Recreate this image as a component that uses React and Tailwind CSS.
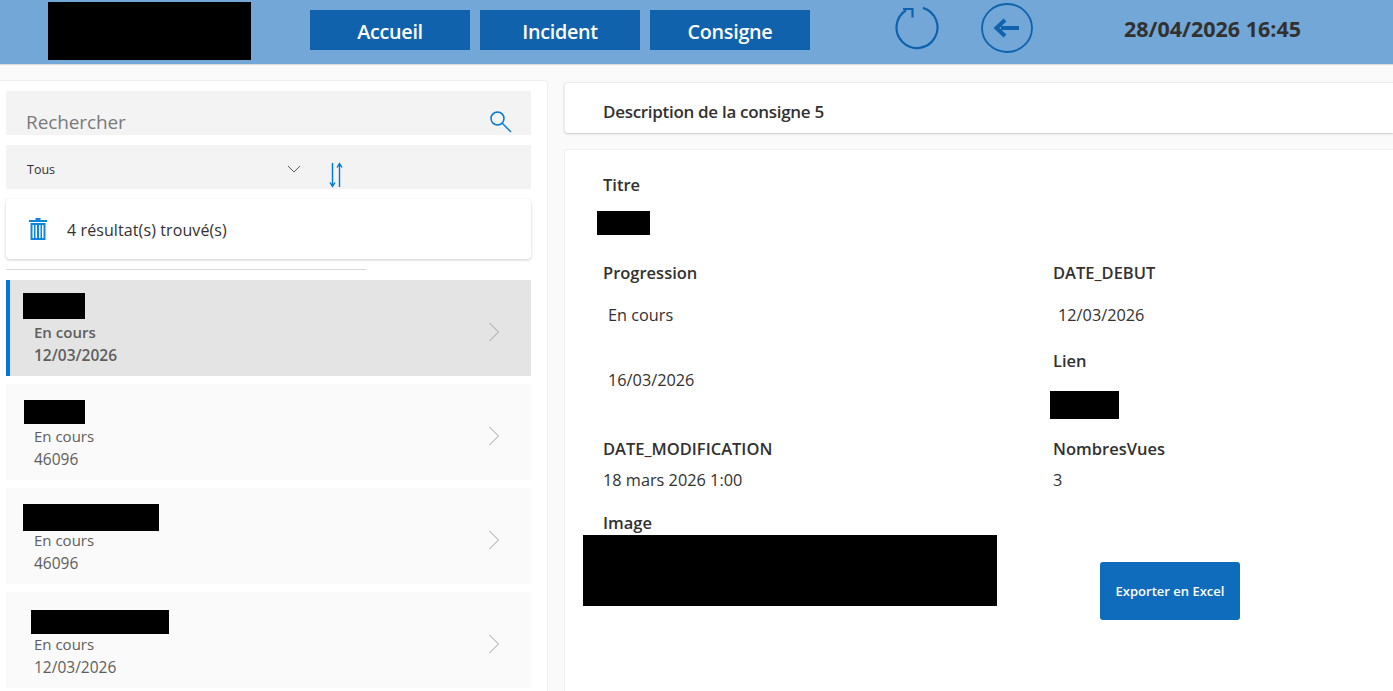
import { useState } from 'react'

const items = [
  { w: 'w-[62px]', h: 'h-[26px]', ml: 'ml-[17px]', mt: 'mt-[13px]', textMt: 'mt-[2px]', date: '12/03/2026' },
  { w: 'w-[61px]', h: 'h-[24px]', ml: 'ml-[18px]', mt: 'mt-[16px]', textMt: 'mt-[1px]', date: '46096' },
  { w: 'w-[136px]', h: 'h-[27px]', ml: 'ml-[17px]', mt: 'mt-[16px]', textMt: '-mt-[2px]', date: '46096' },
  { w: 'w-[138px]', h: 'h-[24px]', ml: 'ml-[25px]', mt: 'mt-[18px]', textMt: '-mt-[1px]', date: '12/03/2026' },
]

function NavButton({ children }) {
  return (
    <button className="w-[160px] h-[40px] bg-[#0f62ab] text-white text-[19.8px] font-semibold tracking-[-0.3px] pt-[4px]">
      {children}
    </button>
  )
}

function RefreshIcon() {
  return (
    <svg width="46" height="46" viewBox="0 0 46 46" fill="none" stroke="#0f62ab" strokeWidth="2.2">
      <path d="M28 2.9 A20.5 20.5 0 1 1 11 5.2" />
      <path d="M8 4 H17.5 V12.5" />
    </svg>
  )
}

function BackIcon() {
  return (
    <svg width="52" height="50" viewBox="0 0 52 50" fill="none" stroke="#0f62ab">
      <ellipse cx="26" cy="25" rx="25" ry="24" strokeWidth="1.8" />
      <path d="M38 25 H20" strokeWidth="4" />
      <path d="M24 17 L15.5 25 L24 33" strokeWidth="4" />
    </svg>
  )
}

function ListItem({ item }) {
  return (
    <div className={`h-[96px] flex items-start justify-between ${item.active ? 'bg-[#e4e4e4] border-l-[4px] border-[#0078d4]' : 'bg-[#fafafa]'}`}>
      <div className={item.active ? '-ml-[4px]' : ''}>
        <div className={`${item.w} ${item.h} ${item.ml} ${item.mt} bg-black`}></div>
        <div className={`ml-[28px] leading-[22px] text-[#605e5c] ${item.textMt} ${item.active ? 'font-semibold' : ''}`}>
          <p className="text-[15px]">En cours</p>
          <p className="text-[15.5px] mt-[1px]">{item.date}</p>
        </div>
      </div>
      <svg className="mr-[31px] mt-[42px] shrink-0" width="12" height="20" viewBox="0 0 12 20" fill="none" stroke="#a19f9d" strokeWidth="1">
        <path d="M1.5 1 L10.5 10 L1.5 19" />
      </svg>
    </div>
  )
}

export default function App() {
  const [selected] = useState(0)

  return (
    <div className="h-[691px] w-[1393px] overflow-hidden bg-[#fafafa] font-['Open_Sans','Liberation_Sans',sans-serif] text-[#323130]">
      {/* header */}
      <header className="h-[64px] bg-[#72a7d8] shadow-[0_1px_1px_rgba(0,0,0,0.12)] flex items-start">
        <div className="ml-[48px] mt-[2px] w-[203px] h-[58px] bg-black"></div>
        <nav className="ml-[59px] mt-[10px] flex gap-[10px]">
          <NavButton>Accueil</NavButton>
          <NavButton>Incident</NavButton>
          <NavButton>Consigne</NavButton>
        </nav>
        <div className="ml-[85px] mt-[5px]"><RefreshIcon /></div>
        <div className="ml-[40px] mt-[3px]"><BackIcon /></div>
        <div className="ml-[91px] mt-[16px] text-[21.5px] leading-[26px] font-bold text-[#323130]">28/04/2026 16:45</div>
      </header>

      <div className="flex items-start">
        {/* left panel */}
        <aside className="mt-[16px] w-[548px] h-[611px] bg-white rounded-tr-[4px] border-r border-t border-[#efefef] pl-[6px] pr-[16px] pt-[10px] shrink-0">
          <div className="h-[44px] bg-[#f3f3f3] flex items-center justify-between pl-[20px] pr-[18px]">
            <span className="text-[19px] text-[#7a7a7a] mt-[18px] tracking-[-0.1px]">Rechercher</span>
            <svg width="24" height="24" viewBox="0 0 24 24" fill="none" stroke="#0078d4" strokeWidth="1.5" className="mt-[17px]">
              <circle cx="8.5" cy="8.5" r="6.5" />
              <path d="M13 13 L22 22" />
            </svg>
          </div>
          <div className="mt-[10px] h-[44px] bg-[#f3f3f3] flex items-center pl-[21px]">
            <span className="text-[12.5px] text-[#323130] w-[260px] mt-[7px]">Tous</span>
            <svg width="14" height="8" viewBox="0 0 14 8" fill="none" stroke="#605e5c" strokeWidth="1" className="mt-[4px]">
              <path d="M1 1 L7 7 L13 1" />
            </svg>
            <svg width="16" height="26" viewBox="0 0 16 26" fill="none" stroke="#0078d4" strokeWidth="1.4" className="ml-[27px] mt-[15px]">
              <path d="M4.5 1 V24 M2 20.5 L4.5 24.5 L7 20.5" />
              <path d="M11.5 25 V2 M9 5.5 L11.5 1.5 L14 5.5" />
            </svg>
          </div>
          <div className="mt-[10px] h-[60px] bg-white rounded-[4px] shadow-[0_1px_3px_rgba(0,0,0,0.2)] flex items-center pl-[23px]">
            <svg width="18" height="22" viewBox="0 0 18 22" fill="#0c86de">
              <path d="M6.5 0 H11.5 V2 H18 V4 H0 V2 H6.5 Z" />
              <path fillRule="evenodd" d="M1.5 5 H16.5 V22 H1.5 Z M3.5 7 V20 H5 V7 Z M6.5 7 V20 H8 V7 Z M10 7 V20 H11.5 V7 Z M13 7 V20 H14.5 V7 Z" />
            </svg>
            <span className="ml-[20px] mt-[2px] text-[16px] text-[#323130] tracking-[0.1px]">4 résultat(s) trouvé(s)</span>
          </div>
          <div className="mt-[10px] w-[360px] h-px bg-[#d8d8d8]"></div>
          <div className="mt-[10px] flex flex-col gap-[8px]">
            {items.map((item, i) => (
              <ListItem key={i} item={{ ...item, active: i === selected }} />
            ))}
          </div>
        </aside>

        {/* right side */}
        <main className="ml-[16px] flex-1 mt-[18px]">
          <div className="h-[51px] bg-white rounded-tl-[4px] rounded-bl-[4px] border-l border-t border-[#eeeeee] shadow-[0_1px_2px_rgba(0,0,0,0.2)] flex items-center pl-[38px] pt-[8px]">
            <h2 className="text-[17px] font-semibold tracking-[-0.3px]">Description de la consigne 5</h2>
          </div>
          <div className="mt-[16px] h-[542px] bg-white rounded-tl-[4px] border-l border-t border-[#eeeeee] flex pl-[38px] text-[16.3px] leading-[20px]">
            <div className="w-[450px] shrink-0">
              <p className="mt-[25px] text-[16.5px] font-semibold">Titre</p>
              <div className="mt-[16px] -ml-[6px] w-[53px] h-[24px] bg-black"></div>
              <p className="mt-[28px] text-[16.5px] font-semibold">Progression</p>
              <p className="mt-[22px] ml-[5px]">En cours</p>
              <p className="mt-[45px] ml-[5px]">16/03/2026</p>
              <p className="mt-[49px] text-[16.5px] font-semibold">DATE_MODIFICATION</p>
              <p className="mt-[11px]">18 mars 2026 1:00</p>
              <p className="mt-[23px] text-[16.5px] font-semibold">Image</p>
              <div className="mt-[2px] -ml-[20px] w-[414px] h-[71px] bg-black"></div>
            </div>
            <div>
              <p className="mt-[113px] text-[16.5px] font-semibold">DATE_DEBUT</p>
              <p className="mt-[22px] ml-[5px]">12/03/2026</p>
              <p className="mt-[26px] text-[16.5px] font-semibold">Lien</p>
              <div className="mt-[20px] -ml-[3px] w-[69px] h-[28px] bg-black"></div>
              <p className="mt-[20px] text-[16.5px] font-semibold">NombresVues</p>
              <p className="mt-[11px]">3</p>
              <button className="mt-[72px] ml-[47px] w-[140px] h-[58px] bg-[#0f6cbd] rounded-[3px] text-white text-[13px] font-semibold">
                Exporter en Excel
              </button>
            </div>
          </div>
        </main>
      </div>
    </div>
  )
}
